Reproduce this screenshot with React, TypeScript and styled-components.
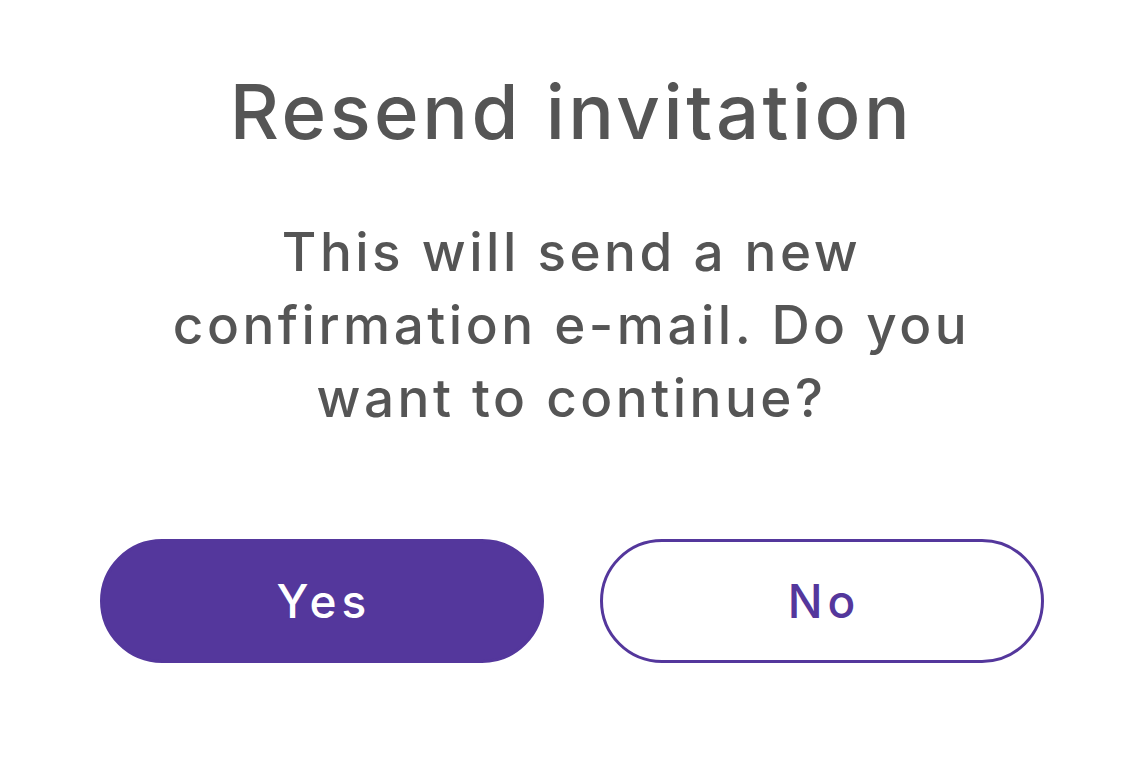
import styled, { createGlobalStyle } from "styled-components";

const GlobalStyle = createGlobalStyle`
  html, body {
    margin: 0;
    padding: 0;
    background: #ffffff;
  }
  body {
    font-family: Inter, "Open Sans", sans-serif;
  }
`;

const Dialog = styled.div`
  width: 1143px;
  height: 769px;
  box-sizing: border-box;
  padding: 66px 0 0;
  display: flex;
  flex-direction: column;
  align-items: center;
  background: #ffffff;
`;

const Title = styled.h2`
  margin: 0;
  font-size: 76px;
  font-weight: 500;
  line-height: 90px;
  color: #555555;
  letter-spacing: 3.5px;
`;

const Message = styled.p`
  margin: 60px 0 0;
  font-size: 53px;
  font-weight: 500;
  line-height: 73px;
  color: #555555;
  text-align: center;
  letter-spacing: 3.5px;
`;

const Actions = styled.div`
  margin-top: 104px;
  display: flex;
  gap: 56px;
`;

const Button = styled.button<{ $primary?: boolean }>`
  width: 444px;
  height: 124px;
  box-sizing: border-box;
  padding: 0 0 0 5px;
  border-radius: 62px;
  border: 3px solid #54379c;
  background: ${({ $primary }) => ($primary ? "#54379c" : "#ffffff")};
  color: ${({ $primary }) => ($primary ? "#ffffff" : "#54379c")};
  font-family: Inter, "Open Sans", sans-serif;
  font-size: 46px;
  font-weight: 500;
  letter-spacing: 5px;
  cursor: pointer;
`;

const App = () => {
  return (
    <>
      <GlobalStyle />
      <Dialog>
        <Title>Resend invitation</Title>
        <Message>
          This will send a new
          <br />
          confirmation e-mail. Do you
          <br />
          want to continue?
        </Message>
        <Actions>
          <Button $primary>Yes</Button>
          <Button>No</Button>
        </Actions>
      </Dialog>
    </>
  );
};

export default App;
